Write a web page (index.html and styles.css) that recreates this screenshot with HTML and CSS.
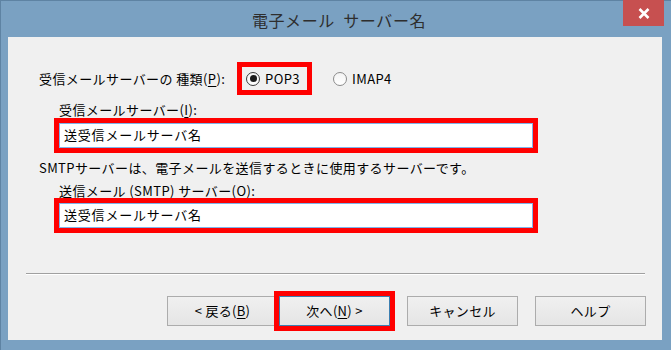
FILE: index.html
```html
<!DOCTYPE html>
<html lang="ja">
<head>
<meta charset="utf-8">
<title>電子メール サーバー名</title>
<link rel="stylesheet" href="styles.css">
</head>
<body>
<div class="window">
  <div class="titlebar">
    <div class="title">電子メール&nbsp;&nbsp;サーバー名</div>
    <div class="close">
      <svg width="12" height="11" viewBox="0 0 12 11"><path d="M1.5 1 L10.5 10 M10.5 1 L1.5 10" stroke="#fff" stroke-width="2.6" fill="none"/></svg>
    </div>
  </div>
  <div class="client">
    <div class="row-type">
      <span class="label">受信メールサーバーの 種類(<u>P</u>):</span>
      <span class="hl-radio">
        <span class="radio checked"></span><span class="rlabel">POP3</span>
      </span>
      <span class="radio other"></span><span class="rlabel">IMAP4</span>
    </div>
    <div class="label sub l2">受信メールサーバー(<u>I</u>):</div>
    <div class="hl-input i1"><div class="field">送受信メールサーバ名</div></div>
    <div class="label note">SMTPサーバーは、電子メールを送信するときに使用するサーバーです。</div>
    <div class="label sub l3">送信メール (SMTP) サーバー(<u>O</u>):</div>
    <div class="hl-input i2"><div class="field">送受信メールサーバ名</div></div>
    <div class="sep"></div>
    <div class="buttons">
      <div class="btn">&lt; 戻る(<u>B</u>)</div>
      <div class="btn default">次へ(<u>N</u>) &gt;</div>
      <div class="btn gap">キャンセル</div>
      <div class="btn gap">ヘルプ</div>
    </div>
  </div>
</div>
</body>
</html>
```
FILE: styles.css
```css
html, body {
  margin: 0;
  padding: 0;
}
body {
  width: 671px;
  height: 350px;
  overflow: hidden;
  font-family: "Noto Sans CJK JP", "Noto Sans", sans-serif;
}
.window {
  box-sizing: border-box;
  width: 671px;
  height: 350px;
  background: #7aa1c2;
  border-top: 1px solid #5e83a3;
  border-left: 1px solid #5e83a3;
  display: flex;
  flex-direction: column;
}
.titlebar {
  height: 36px;
  display: grid;
  grid-template-columns: 1fr auto 1fr;
  align-items: start;
}
.title {
  grid-column: 2;
  font-size: 16px;
  letter-spacing: 0.6px;
  color: #2e2e2e;
  line-height: 20px;
  margin-top: 9px;
  margin-left: 6px;
}
.close {
  grid-column: 3;
  justify-self: end;
  width: 41px;
  height: 26px;
  margin-right: 7px;
  margin-top: -1px;
  background: #c75050;
  display: flex;
  align-items: center;
  justify-content: center;
}
.client {
  flex: 1;
  margin: 0 9px 10px 7px;
  background: #f0f0f0;
  display: flex;
  flex-direction: column;
  font-size: 13px;
  letter-spacing: 0.4px;
  color: #000;
}
.label {
  line-height: 14px;
  white-space: nowrap;
}
u {
  text-decoration: underline;
  text-underline-offset: 2px;
}
.row-type {
  margin-top: 25px;
  height: 33px;
  display: flex;
  align-items: center;
  padding-left: 31px;
}
.row-type .label {
  width: 198px;
}
.hl-radio {
  box-sizing: border-box;
  width: 75px;
  height: 33px;
  border: 5px solid #ff0000;
  display: flex;
  align-items: center;
  padding-left: 4px;
}
.radio {
  box-sizing: border-box;
  width: 14px;
  height: 14px;
  border-radius: 50%;
  border: 1px solid #8b8b8b;
  background: linear-gradient(#f4f4f4, #ffffff);
  display: flex;
  align-items: center;
  justify-content: center;
  flex: none;
}
.radio.checked {
  border-color: #3a3a3a;
}
.radio.checked::after {
  content: "";
  width: 7px;
  height: 7px;
  border-radius: 50%;
  background: #1a1a1a;
}
.radio.other {
  margin-left: 21px;
}
.rlabel {
  margin-left: 5px;
  line-height: 14px;
}
.sub {
  padding-left: 51px;
}
.l2 {
  margin-top: 8px;
}
.hl-input {
  box-sizing: border-box;
  width: 484px;
  height: 35px;
  margin-left: 46px;
  border: 5px solid #ff0000;
}
.i1 {
  margin-top: 1px;
}
.field {
  box-sizing: border-box;
  height: 25px;
  background: #fff;
  border: 1px solid #7eb4ea;
  padding-left: 4px;
  line-height: 22px;
  letter-spacing: 0.8px;
}
.note {
  margin-top: 8px;
  padding-left: 31px;
}
.l3 {
  margin-top: 9px;
}
.i2 {
  margin-top: 0;
}
.sep {
  margin: 40px 17px 0 18px;
  height: 1px;
  background: #a0a0a0;
  border-bottom: 1px solid #ffffff;
}
.buttons {
  margin-top: 21px;
  display: flex;
  padding-left: 159px;
}
.btn {
  box-sizing: border-box;
  width: 111px;
  height: 30px;
  border: 1px solid #acacac;
  background: linear-gradient(#f0f0f0, #e5e5e5);
  display: flex;
  align-items: center;
  justify-content: center;
  line-height: 14px;
  letter-spacing: 0.3px;
}
.btn.default {
  border-color: #3c7fb1;
  outline: 5px solid #ff0000;
  outline-offset: 0;
  margin-left: 1px;
}
.btn.gap {
  margin-left: 17px;
}
```
